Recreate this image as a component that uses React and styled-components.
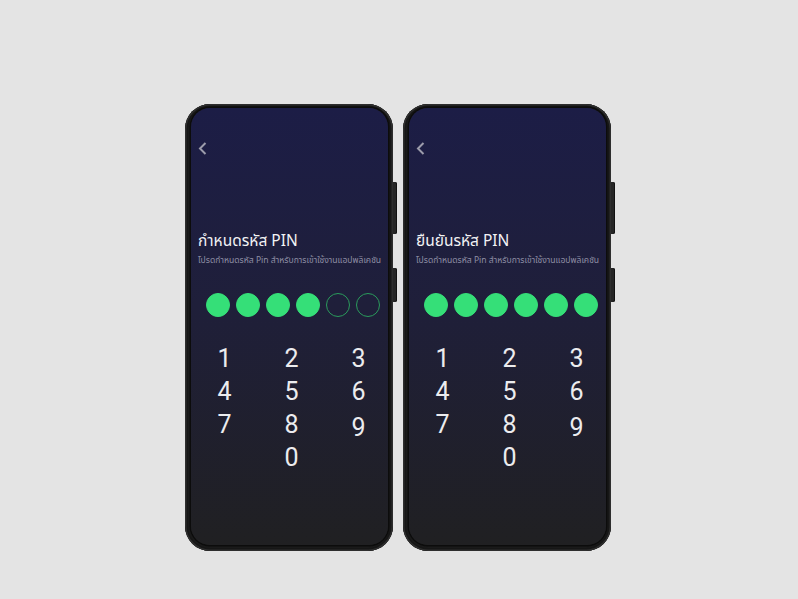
import React from 'react';
import styled, { createGlobalStyle } from 'styled-components';

const GlobalStyle = createGlobalStyle`
  html, body {
    margin: 0;
    padding: 0;
    background: #e4e4e4;
  }
  body {
    font-family: "Noto Sans Thai", "Noto Sans", sans-serif;
  }
`;

const Page = styled.div`
  width: 798px;
  height: 599px;
  display: flex;
  justify-content: center;
  align-items: flex-start;
  gap: 10px;
  padding: 104px 2px 0 0;
  box-sizing: border-box;
`;

const Phone = styled.div`
  position: relative;
  width: 208px;
  height: 447px;
  box-sizing: border-box;
  padding: 4px 5px 6px 6px;
  border-radius: 25px;
  background: #1a1a1a;
  box-shadow: inset 0 0 0 1.5px #2e2e2e, inset 0 0 0 3px #161616;
`;

const SideButton = styled.div`
  position: absolute;
  right: -4px;
  top: ${p => p.top}px;
  width: 4px;
  height: ${p => p.h}px;
  border-radius: 0 2px 2px 0;
  background: #262626;
  box-shadow: inset -1px 0 0 #111;
`;

const Screen = styled.div`
  width: 100%;
  height: 100%;
  border-radius: 19px;
  overflow: hidden;
  background: linear-gradient(180deg, #1c1d46 0%, #1f1f3a 45%, #202022 100%);
  box-shadow: 0 0 0 1.5px #0c0c0c;
  display: flex;
  flex-direction: column;
`;

const Header = styled.div`
  display: flex;
  flex-direction: column;
  padding: 34px 7px 0 7px;
`;

const Back = styled.svg`
  width: 10px;
  height: 13px;
  display: block;
`;

const Title = styled.div`
  margin-top: 77px;
  font-size: 15.5px;
  line-height: 20px;
  color: #f2f2f4;
  white-space: nowrap;
`;

const Subtitle = styled.div`
  margin-top: 3px;
  font-size: 8.6px;
  line-height: 12px;
  color: #8e8ea4;
  white-space: nowrap;
`;

const Dots = styled.div`
  display: flex;
  gap: 6px;
  margin-top: 26px;
  padding-left: 15px;
`;

const Dot = styled.div`
  width: 24px;
  height: 24px;
  border-radius: 50%;
  box-sizing: border-box;
  background: ${p => (p.filled ? '#35df78' : 'transparent')};
  border: 1px solid ${p => (p.filled ? '#35df78' : '#2a9b5c')};
`;

const Keypad = styled.div`
  display: grid;
  grid-template-columns: repeat(3, 67px);
  grid-auto-rows: 33px;
  margin-top: 25px;
  font-family: Roboto, "Liberation Sans", sans-serif;
`;

const Key = styled.div`
  grid-column: ${p => p.col || 'auto'};
  text-align: center;
  font-size: 25px;
  line-height: 33px;
  color: #ececee;
  position: relative;
  top: ${p => (p.drop ? 3 : 0)}px;
`;

const keys = ['1', '2', '3', '4', '5', '6', '7', '8', '9'];

const PinScreen = ({ title, filled }) => (
  <Phone>
    <SideButton top={78} h={52} />
    <SideButton top={164} h={34} />
    <Screen>
      <Header>
        <Back viewBox="0 0 10 13">
          <path d="M7.5 1 L2 6.5 L7.5 12" fill="none" stroke="#9c9cab" strokeWidth="2" />
        </Back>
        <Title>{title}</Title>
        <Subtitle>โปรดกำหนดรหัส Pin สำหรับการเข้าใช้งานแอปพลิเคชัน</Subtitle>
      </Header>
      <Dots>
        {[0, 1, 2, 3, 4, 5].map(i => (
          <Dot key={i} filled={i < filled} />
        ))}
      </Dots>
      <Keypad>
        {keys.map(k => (
          <Key key={k} drop={k === '9'}>{k}</Key>
        ))}
        <Key col={2}>0</Key>
      </Keypad>
    </Screen>
  </Phone>
);

export default function App() {
  return (
    <>
      <GlobalStyle />
      <Page>
        <PinScreen title="กำหนดรหัส PIN" filled={4} />
        <PinScreen title="ยืนยันรหัส PIN" filled={6} />
      </Page>
    </>
  );
}
